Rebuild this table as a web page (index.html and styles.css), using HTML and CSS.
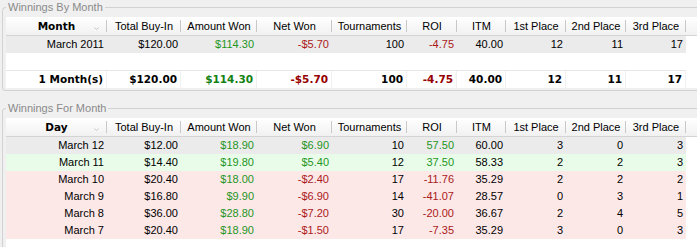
FILE: index.html
```html
<!DOCTYPE html>
<html>
<head>
<meta charset="utf-8">
<link rel="stylesheet" href="styles.css">
</head>
<body>
<fieldset class="group">
  <legend class="legend">Winnings By Month</legend>
  <div class="list">
    <div class="head">
      <div class="hrow">
        <div class="hc first"><span class="htext">Month</span><svg class="sort" width="5" height="3" viewBox="0 0 5 3"><polyline points="0.5,0.5 2.5,2.5 4.5,0.5" fill="none" stroke="#c4c4c4" stroke-width="1"/></svg></div>
        <div class="hc">Total Buy-In</div>
        <div class="hc">Amount Won</div>
        <div class="hc">Net Won</div>
        <div class="hc">Tournaments</div>
        <div class="hc">ROI</div>
        <div class="hc">ITM</div>
        <div class="hc">1st Place</div>
        <div class="hc">2nd Place</div>
        <div class="hc">3rd Place</div>
      </div>
    </div>
    <div class="row sel">
      <div class="c">March 2011</div><div class="c">$120.00</div><div class="c g">$114.30</div><div class="c r">-$5.70</div><div class="c">100</div><div class="c r">-4.75</div><div class="c">40.00</div><div class="c">12</div><div class="c">11</div><div class="c">17</div>
    </div>
    <div class="row blank"></div>
    <div class="row total">
      <div class="c">1 Month(s)</div><div class="c">$120.00</div><div class="c g">$114.30</div><div class="c r">-$5.70</div><div class="c">100</div><div class="c r">-4.75</div><div class="c">40.00</div><div class="c">12</div><div class="c">11</div><div class="c">17</div>
    </div>
  </div>
</fieldset>

<fieldset class="group second">
  <legend class="legend">Winnings For Month</legend>
  <div class="list">
    <div class="head">
      <div class="hrow">
        <div class="hc first"><span class="htext">Day</span><svg class="sort" width="5" height="3" viewBox="0 0 5 3"><polyline points="0.5,0.5 2.5,2.5 4.5,0.5" fill="none" stroke="#c4c4c4" stroke-width="1"/></svg></div>
        <div class="hc">Total Buy-In</div>
        <div class="hc">Amount Won</div>
        <div class="hc">Net Won</div>
        <div class="hc">Tournaments</div>
        <div class="hc">ROI</div>
        <div class="hc">ITM</div>
        <div class="hc">1st Place</div>
        <div class="hc">2nd Place</div>
        <div class="hc">3rd Place</div>
      </div>
    </div>
    <div class="row sel">
      <div class="c">March 12</div><div class="c">$12.00</div><div class="c g">$18.90</div><div class="c g">$6.90</div><div class="c">10</div><div class="c g">57.50</div><div class="c">60.00</div><div class="c">3</div><div class="c">0</div><div class="c">3</div>
    </div>
    <div class="row win">
      <div class="c">March 11</div><div class="c">$14.40</div><div class="c g">$19.80</div><div class="c g">$5.40</div><div class="c">12</div><div class="c g">37.50</div><div class="c">58.33</div><div class="c">2</div><div class="c">2</div><div class="c">3</div>
    </div>
    <div class="row loss">
      <div class="c">March 10</div><div class="c">$20.40</div><div class="c g">$18.00</div><div class="c r">-$2.40</div><div class="c">17</div><div class="c r">-11.76</div><div class="c">35.29</div><div class="c">2</div><div class="c">2</div><div class="c">2</div>
    </div>
    <div class="row loss">
      <div class="c">March 9</div><div class="c">$16.80</div><div class="c g">$9.90</div><div class="c r">-$6.90</div><div class="c">14</div><div class="c r">-41.07</div><div class="c">28.57</div><div class="c">0</div><div class="c">3</div><div class="c">1</div>
    </div>
    <div class="row loss">
      <div class="c">March 8</div><div class="c">$36.00</div><div class="c g">$28.80</div><div class="c r">-$7.20</div><div class="c">30</div><div class="c r">-20.00</div><div class="c">36.67</div><div class="c">2</div><div class="c">4</div><div class="c">5</div>
    </div>
    <div class="row loss">
      <div class="c">March 7</div><div class="c">$20.40</div><div class="c g">$18.90</div><div class="c r">-$1.50</div><div class="c">17</div><div class="c r">-7.35</div><div class="c">35.29</div><div class="c">3</div><div class="c">0</div><div class="c">3</div>
    </div>
    <div class="filler"></div>
  </div>
</fieldset>
</body>
</html>
```
FILE: styles.css
```css
html, body {
  margin: 0;
  padding: 0;
  overflow: hidden;
}
body {
  background: #f0f0f0;
  font-family: "Liberation Sans", Arial, sans-serif;
  font-size: 11px;
  color: #000;
  width: 697px;
  height: 247px;
}
.group {
  margin: 0 0 0 2px;
  padding: 3px 0 2px 3px;
  border: 1px solid #d2d2d2;
  border-right: none;
  border-radius: 4px 0 0 4px;
  min-width: 0;
  width: 695px;
  box-sizing: border-box;
}
.second {
  margin-top: 10px;
  padding-bottom: 0;
  border-bottom: none;
  border-radius: 4px 0 0 0;
}
.legend {
  padding: 0 2px;
  margin: 0;
  line-height: 14px;
  height: 14px;
  color: #8a8a8a;
  font-size: 11px;
}
.list {
  background: #fff;
}
.head {
  background: linear-gradient(#ffffff, #f1f1f1);
  border-bottom: 1px solid #d4d4d4;
}
.hrow, .row {
  display: grid;
  grid-template-columns: 101px 74px 76px 75px 75px 50px 49px 60px 60px 60px;
  width: 680px;
}
.hc {
  height: 18px;
  line-height: 18px;
  text-align: center;
  white-space: nowrap;
  background: linear-gradient(#c8c8c8, #c8c8c8) right 3px / 1px 12px no-repeat;
}
.hc.first {
  display: grid;
  grid-template-columns: 1fr auto 1fr;
  align-items: center;
}
.htext {
  grid-column: 2;
  font-family: "DejaVu Sans", Verdana, sans-serif;
  font-weight: bold;
  font-size: 10.5px;
}
.sort {
  grid-column: 3;
  justify-self: end;
  margin: 4px 8px 0 0;
}
.row {
  height: 17px;
}
.c {
  line-height: 17px;
  text-align: right;
  padding-right: 3px;
  white-space: nowrap;
}
.sel { background: #ebebeb; }
.win { background: #e9fce9; }
.loss { background: #fde8e8; }
.g { color: #1f961f; }
.r { color: #aa1a1a; }
.total {
  border-top: 1px solid #e6e6e6;
  font-family: "DejaVu Sans", Verdana, sans-serif;
  font-weight: bold;
  font-size: 10.5px;
}
.total .c {
  border-right: 1px solid #f0f0f0;
}
.total .g { color: #138213; }
.total .r { color: #960000; }
.filler {
  height: 8px;
}
```
